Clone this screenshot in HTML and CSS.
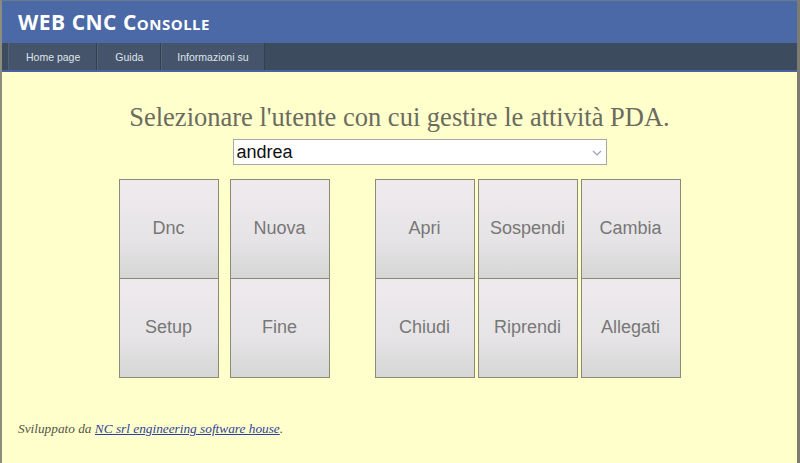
FILE: index.html
```html
<!DOCTYPE html>
<html lang="it">
<head>
    <meta charset="UTF-8">
    <title>WEB CNC Consolle</title>
    <link rel="stylesheet" href="styles.css">
</head>
<body>
<div class="page">
    <div class="header">
        <h1 class="title">WEB CNC Consolle</h1>
    </div>
    <div class="menu">
        <a class="tab" href="#">Home page</a>
        <a class="tab" href="#">Guida</a>
        <a class="tab" href="#">Informazioni su</a>
    </div>

    <div class="main">
        <h2 class="prompt">Selezionare l'utente con cui gestire le attività PDA.</h2>
        <div class="picker">
            <select class="user">
                <option>andrea</option>
            </select>
            <svg class="caret" width="10" height="6" viewBox="0 0 10 6"><path d="M1 1 L5 5 L9 1" fill="none" stroke="#9aa4b8" stroke-width="1.2"/></svg>
        </div>

        <div class="buttons">
            <div class="group">
                <div class="col">
                    <button class="btn">Dnc</button>
                    <button class="btn">Setup</button>
                </div>
                <div class="col">
                    <button class="btn">Nuova</button>
                    <button class="btn">Fine</button>
                </div>
            </div>
            <div class="group tight">
                <div class="col">
                    <button class="btn">Apri</button>
                    <button class="btn">Chiudi</button>
                </div>
                <div class="col">
                    <button class="btn">Sospendi</button>
                    <button class="btn">Riprendi</button>
                </div>
                <div class="col">
                    <button class="btn">Cambia</button>
                    <button class="btn">Allegati</button>
                </div>
            </div>
        </div>
    </div>

    <div class="footer">
        Sviluppato da <a href="#">NC srl engineering software house</a>.
    </div>
</div>
</body>
</html>
```

FILE: styles.css
```css
html, body {
    margin: 0;
    padding: 0;
    height: 100%;
}
body {
    background-color: #ffffcc;
}
.page {
    height: 463px;
    box-sizing: border-box;
    border-left: 2px solid #8c8c80;
    border-right: 3px solid #7c7c70;
    border-top: 1px solid #6a7a90;
    background-color: #ffffcc;
    display: flex;
    flex-direction: column;
}
.header {
    background-color: #4a69a6;
    height: 42px;
    display: flex;
    align-items: center;
    padding-left: 16px;
}
.title {
    margin: 0;
    font-family: "Open Sans", sans-serif;
    font-weight: bold;
    font-size: 21px;
    font-variant: small-caps;
    color: #ffffff;
    letter-spacing: 0.5px;
}
.menu {
    background-color: #3d4b5e;
    height: 27px;
    padding-left: 6px;
    display: flex;
    border-bottom: 2px solid #4b62a0;
}
.tab {
    display: flex;
    align-items: center;
    background-color: #45546a;
    border-right: 1px solid #34404f;
    border-left: 1px solid #53627a;
    color: #dfe4ec;
    font-family: Arial, "Liberation Sans", sans-serif;
    font-size: 10.5px;
    text-decoration: none;
}
.tab:first-child { padding: 0 16px 0 17px; }
.tab:nth-child(2) { padding: 0 17px; }
.tab:nth-child(3) { padding: 0 15px; }
.main {
    flex: 1;
    display: flex;
    flex-direction: column;
    align-items: center;
}
.prompt {
    margin: 30px 0 6px;
    font-family: "Liberation Serif", "Times New Roman", serif;
    font-weight: normal;
    font-size: 26.5px;
    color: #6b6b5e;
}
.picker {
    position: relative;
    width: 374px;
    margin-left: 40px;
}
.user {
    width: 100%;
    height: 26px;
    margin: 0;
    padding: 0 3px;
    -webkit-appearance: none;
    appearance: none;
    background-color: #ffffff;
    border: 1px solid #a8a8a8;
    border-radius: 0;
    font-family: Arial, "Liberation Sans", sans-serif;
    font-size: 18px;
    color: #111111;
}
.caret {
    position: absolute;
    right: 5px;
    top: 11px;
    pointer-events: none;
}
.buttons {
    display: flex;
    gap: 45px;
    margin-top: 14px;
}
.group {
    display: flex;
    gap: 11px;
}
.group.tight {
    gap: 3px;
}
.col {
    display: flex;
    flex-direction: column;
}
.btn {
    width: 100px;
    height: 100px;
    margin: 0;
    margin-top: -1px;
    border: 1px solid #8a8a76;
    background: linear-gradient(to bottom, #efeaee 0%, #e6e4e6 60%, #d6d6d6 100%);
    font-family: Arial, "Liberation Sans", sans-serif;
    font-size: 18px;
    color: #777777;
    padding: 0 0 2px;
}
.col .btn:first-child {
    margin-top: 0;
}
.footer {
    padding: 0 0 26px 16px;
    font-family: "Liberation Serif", "Times New Roman", serif;
    font-style: italic;
    font-size: 13.3px;
    color: #555548;
}
.footer a {
    color: #2f3f9c;
}
```
